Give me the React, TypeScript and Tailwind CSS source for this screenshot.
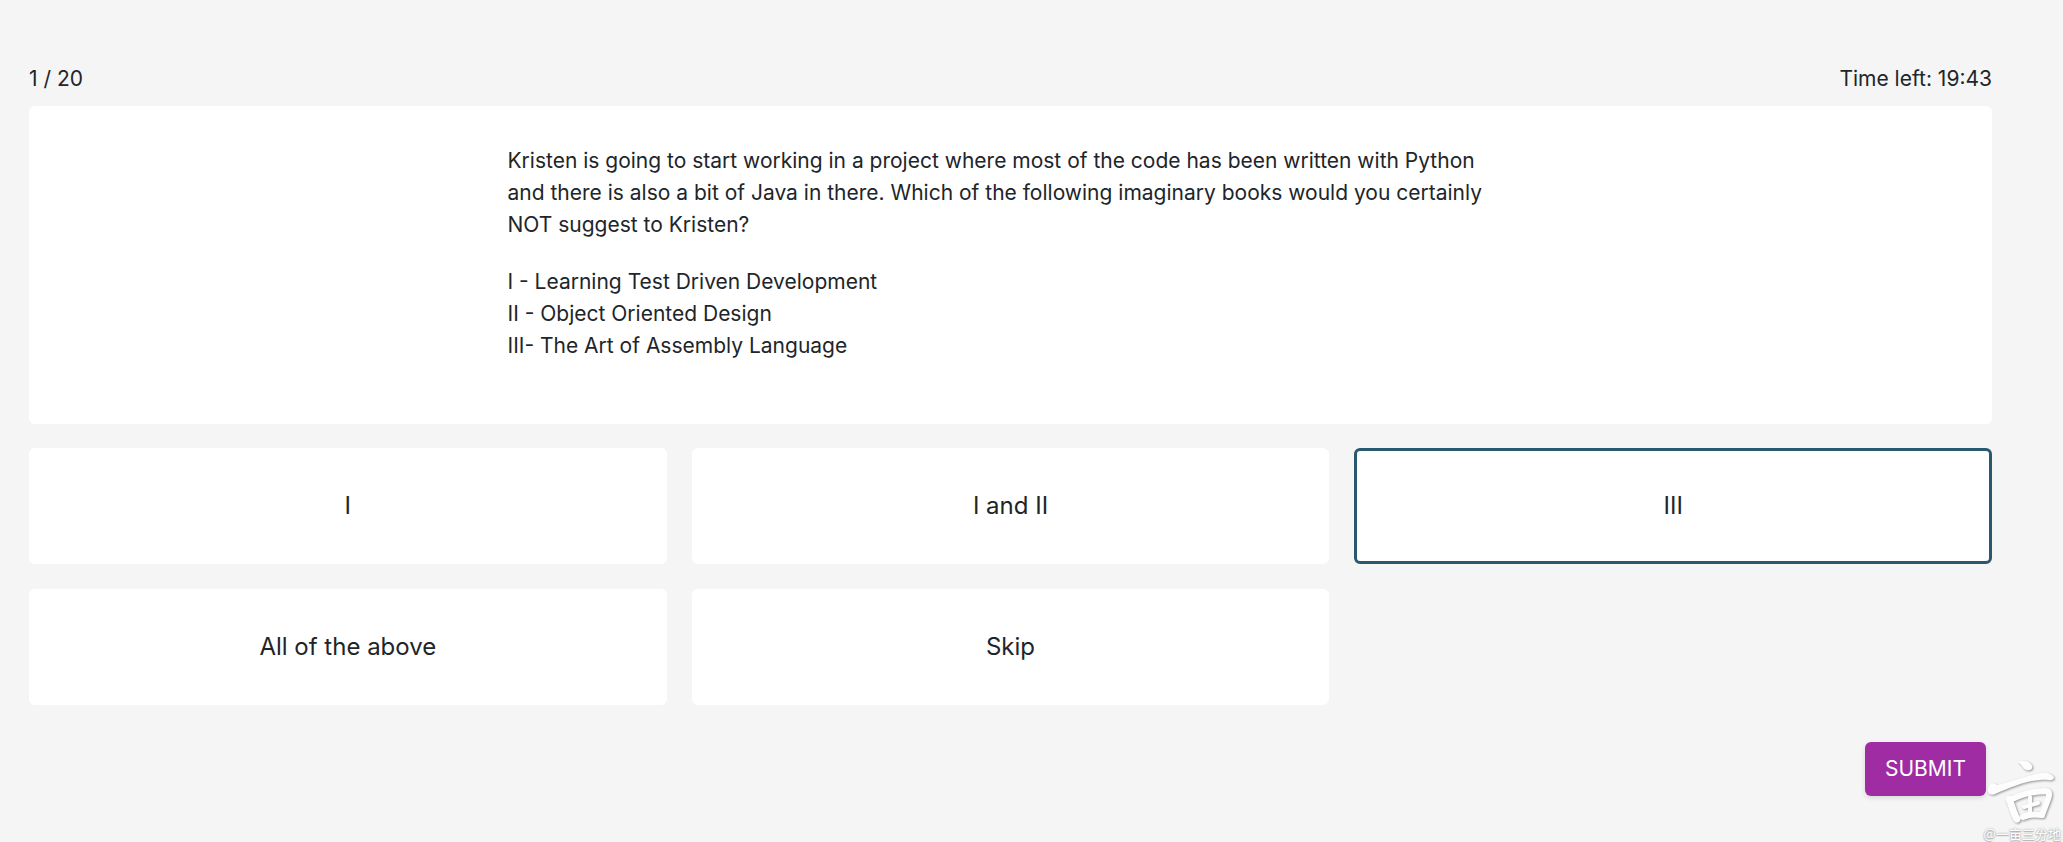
import { useState } from "react";

const answers = ["I", "I and II", "III", "All of the above", "Skip"];

function BrandMark() {
  return (
    <svg
      viewBox="0 0 90 90"
      className="h-[90px] w-[90px] overflow-visible drop-shadow-[1px_1px_1px_rgba(0,0,0,0.4)]"
      role="img"
      aria-label="一亩三分地"
    >
      <g fill="#fdfdfd">
        <path d="M45 10C47 8 55 8 58 12C61 16 58 19 54 18C49 17 50 13 45 10Z" />
        <path d="M15 37C16 31 21 30 24 33C38 30 55 23 68 21C74 20 80 22 81 26C79 30 74 27 67 28C52 29 36 36 22 42C17 44 14 41 15 37Z" />
      </g>
      <g fill="none" stroke="#fdfdfd" strokeLinecap="round" strokeLinejoin="round">
        <path strokeWidth="7" d="M36 47C39 53 40 61 44 67" />
        <path strokeWidth="6" d="M39 47C50 42 64 39 73 39C79 40 75 47 72 55L69 63" />
        <path strokeWidth="4" d="M51 55L65 51M57 45L57 63" />
        <path strokeWidth="6" d="M50 65C56 62 63 62 69 63" />
      </g>
    </svg>
  );
}

export default function App() {
  const [selected, setSelected] = useState("III");

  return (
    <main className="relative min-h-screen overflow-hidden bg-[#f5f5f5] pt-[63px] pr-[71px] pb-[46px] pl-[29px] font-[Inter,sans-serif] text-[21px] leading-8 text-[#212529]">
      <header className="mb-[11px] flex justify-between">
        <span>1 / 20</span>
        <span>Time left: 19:43</span>
      </header>

      <section className="rounded-md bg-white px-6 pt-[39px] pb-[62px]">
        <div className="mx-auto flex max-w-[1006px] flex-col gap-[25px]">
          <p>
            Kristen is going to start working in a project where most of the code has been written
            with Python and there is also a bit of Java in there. Which of the following imaginary
            books would you certainly NOT suggest to Kristen?
          </p>
          <p>
            I - Learning Test Driven Development
            <br />
            II - Object Oriented Design
            <br />
            III- The Art of Assembly Language
          </p>
        </div>
      </section>

      <div className="mt-6 grid grid-cols-3 gap-[25px]">
        {answers.map((answer) => (
          <button
            key={answer}
            type="button"
            aria-pressed={selected === answer}
            onClick={() => setSelected(answer)}
            className={`h-[116px] rounded-md border-3 bg-white text-2xl ${
              selected === answer ? "border-[#28596f]" : "border-white"
            }`}
          >
            {answer}
          </button>
        ))}
      </div>

      <div className="mt-[37px] flex justify-end pr-[6px]">
        <button
          type="submit"
          className="h-[54px] rounded-md bg-[#a02ca4] px-5 text-[21px] text-white shadow-[0_2px_5px_rgba(0,0,0,0.12)]"
        >
          SUBMIT
        </button>
      </div>

      <div className="pointer-events-none absolute right-0 bottom-0">
        <BrandMark />
        <span className="absolute right-[2px] bottom-0 font-['Noto_Sans_CJK_SC',sans-serif] text-[13px] leading-4 font-medium whitespace-nowrap text-[#fafafa] [text-shadow:0_0_2px_#999,0_1px_1px_#bbb]">
          @一亩三分地
        </span>
      </div>
    </main>
  );
}
